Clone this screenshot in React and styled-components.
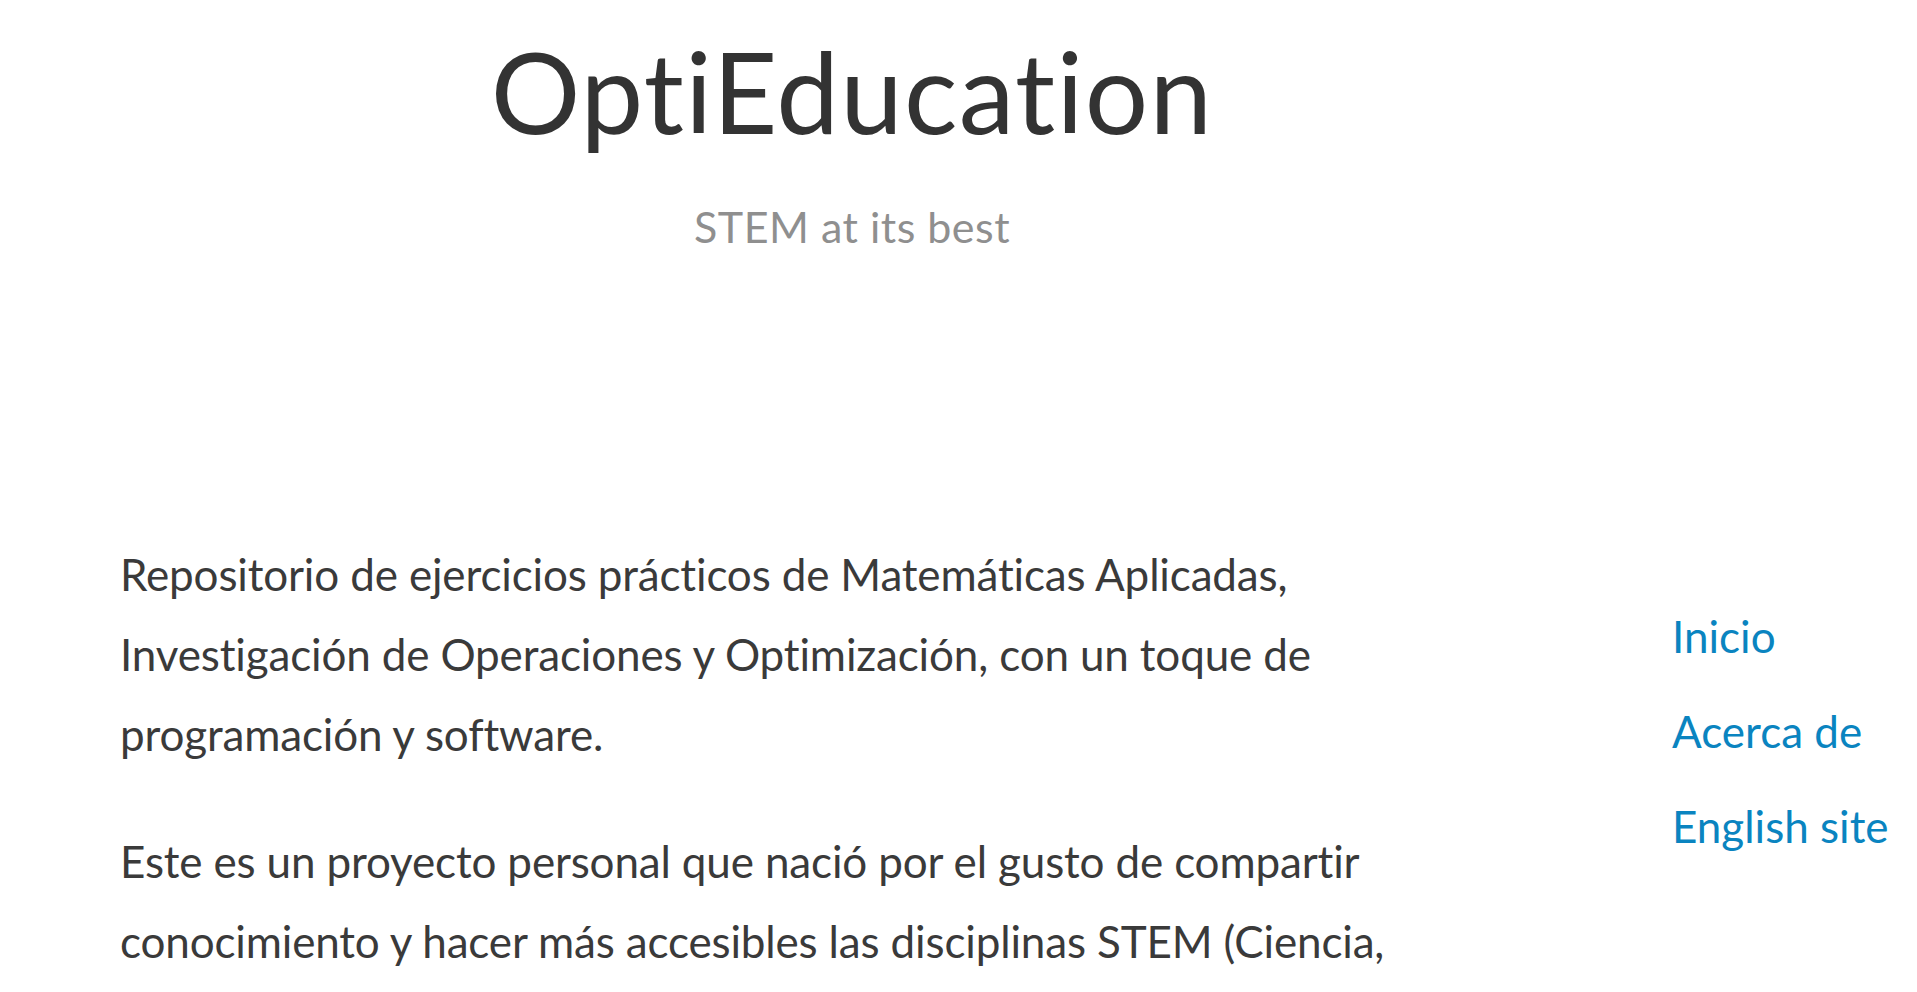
import React from "react";
import styled, { createGlobalStyle } from "styled-components";

const Global = createGlobalStyle`
  html, body { margin: 0; padding: 0; background: #ffffff; }
  body { font-family: Lato, "Open Sans", sans-serif; color: #333333; }
`;

const Page = styled.div`
  display: grid;
  grid-template-columns: 1464px 1fr;
  column-gap: 88px;
  padding-left: 120px;
  box-sizing: border-box;
  width: 1917px;
  min-height: 992px;
`;

const Main = styled.main`
  display: flex;
  flex-direction: column;
`;

const Header = styled.header`
  text-align: center;
  padding-top: 35px;
`;

const SiteTitle = styled.h1`
  margin: 0;
  font-family: Lato, sans-serif;
  font-weight: 400;
  font-size: 112px;
  line-height: 1;
  letter-spacing: 1.3px;
  color: #333333;
`;

const Tagline = styled.p`
  margin: 54px 0 0;
  font-family: Lato, sans-serif;
  font-size: 43px;
  line-height: 1.2;
  letter-spacing: 0.5px;
  color: #8f8f8f;
`;

const Content = styled.div`
  max-width: 1360px;
  margin-top: 281px;
`;

const Para = styled.p`
  margin: 0 0 47px;
  font-family: Lato, sans-serif;
  font-size: 44px;
  line-height: 80px;
  letter-spacing: -0.15px;
  color: #3a3a3a;
`;

const Sidebar = styled.nav`
  display: flex;
  flex-direction: column;
  padding-top: 589px;
`;

const NavLink = styled.a`
  font-family: Lato, sans-serif;
  font-size: 44px;
  line-height: 95px;
  color: #0a84c0;
  text-decoration: none;
  white-space: nowrap;
`;

export default function App() {
  return (
    <>
      <Global />
      <Page>
        <Main>
          <Header>
            <SiteTitle>OptiEducation</SiteTitle>
            <Tagline>STEM at its best</Tagline>
          </Header>
          <Content>
            <Para>
              Repositorio de ejercicios prácticos de Matemáticas Aplicadas,
              Investigación de Operaciones y Optimización, con un toque de
              programación y software.
            </Para>
            <Para>
              Este es un proyecto personal que nació por el gusto de compartir
              conocimiento y hacer más accesibles las disciplinas STEM (Ciencia,
              Tecnología, Ingeniería y Matemáticas).
            </Para>
          </Content>
        </Main>
        <Sidebar>
          <NavLink href="#">Inicio</NavLink>
          <NavLink href="#">Acerca de</NavLink>
          <NavLink href="#">English site</NavLink>
        </Sidebar>
      </Page>
    </>
  );
}
